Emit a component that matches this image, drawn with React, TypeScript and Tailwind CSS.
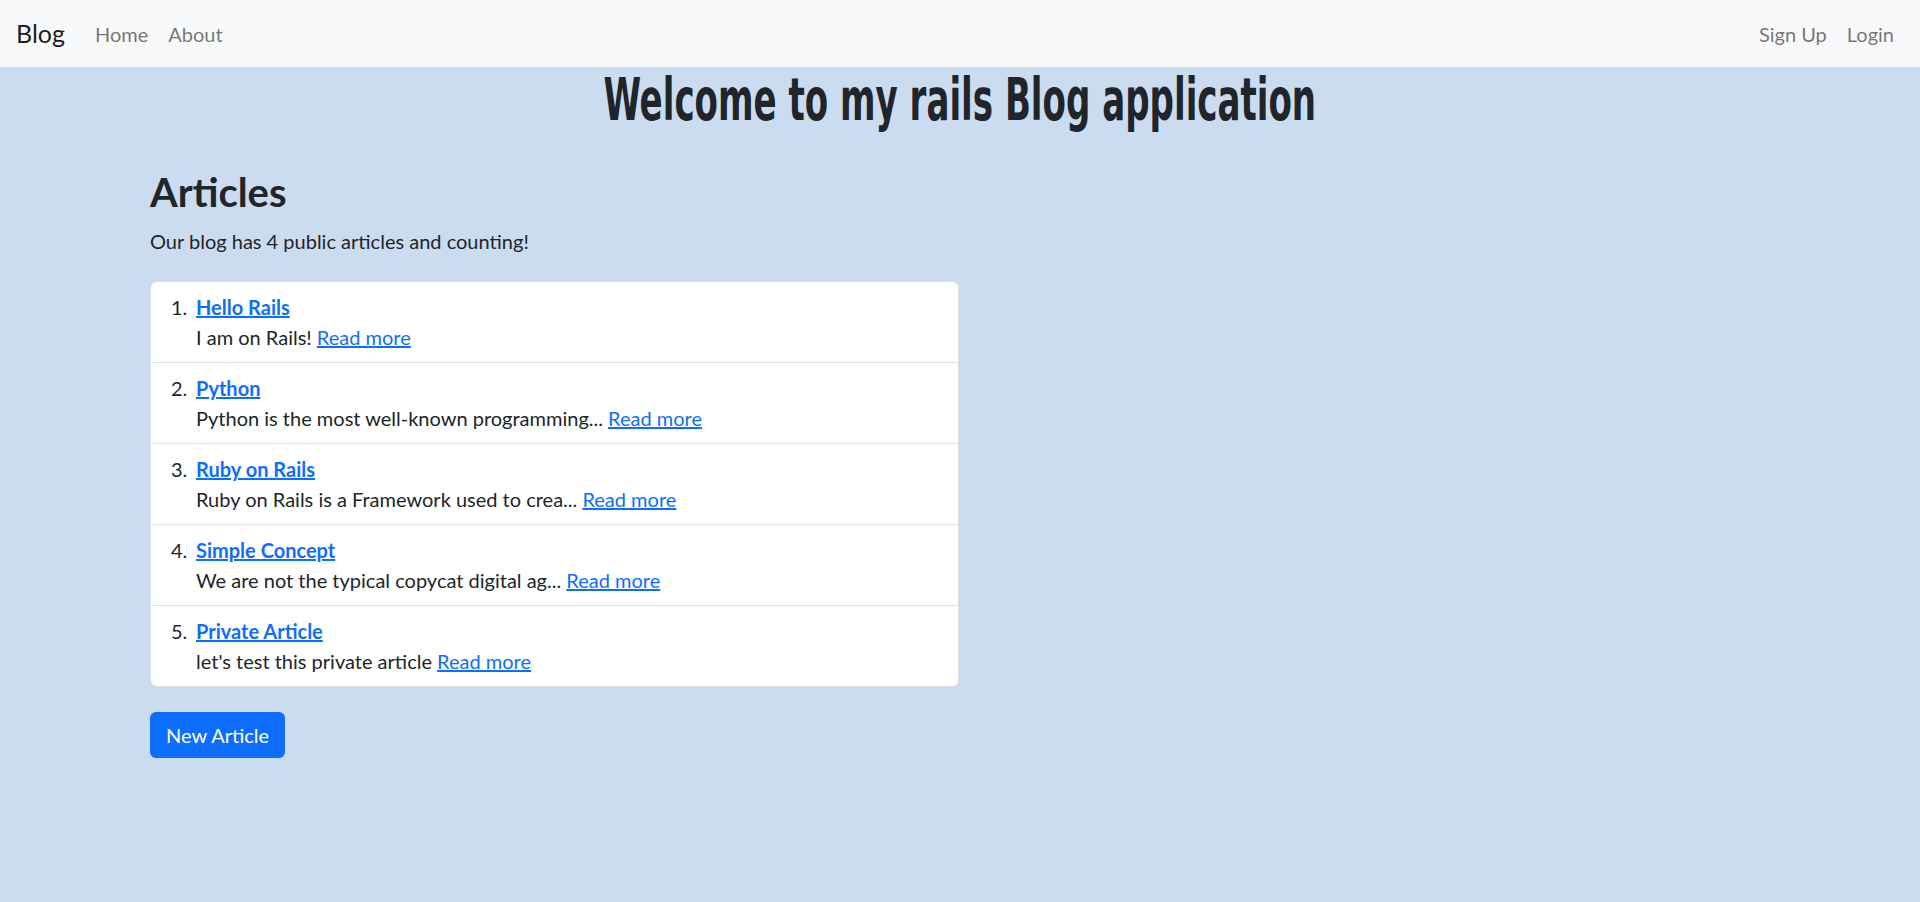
const articles = [
  { title: "Hello Rails", body: "I am on Rails!" },
  { title: "Python", body: "Python is the most well-known programming..." },
  { title: "Ruby on Rails", body: "Ruby on Rails is a Framework used to crea..." },
  { title: "Simple Concept", body: "We are not the typical copycat digital ag..." },
  { title: "Private Article", body: "let's test this private article" },
];

const sans = "font-['Lato','Noto_Sans',sans-serif]";

export default function App() {
  return (
    <div className={`min-h-screen bg-[#cbdcf0] text-[#212529] ${sans}`}>
      <nav className="flex h-[67px] items-center justify-between bg-[#f8f9fa] px-4">
        <div className="flex items-center">
          <a href="#" className="mr-[20px] text-[25px] text-black/90">
            Blog
          </a>
          <a href="#" className="px-[10px] text-[20px] text-black/55">
            Home
          </a>
          <a href="#" className="px-[10px] text-[20px] text-black/55">
            About
          </a>
        </div>
        <div className="flex items-center">
          <a href="#" className="px-[10px] text-[20px] text-black/55">
            Sign Up
          </a>
          <a href="#" className="px-[10px] text-[20px] text-black/55">
            Login
          </a>
        </div>
      </nav>

      <h1 className="pt-[2px] text-center font-['Liberation_Sans_Narrow','DejaVu_Sans_Condensed',sans-serif] text-[58px] font-bold leading-[62px] text-[#212529]">
        <span className="inline-block scale-x-[0.653]">Welcome to my rails Blog application</span>
      </h1>

      <main className="mx-auto w-[1650px] px-[15px] pt-[37px]">
        <h2 className="text-[40px] font-bold leading-[48px]">Articles</h2>
        <p className="mt-[10px] text-[20px] leading-[30px]">
          Our blog has 4 public articles and counting!
        </p>

        <ol className="mt-[25px] w-[809px] overflow-hidden rounded-[7px] border border-[#dee2e6] bg-white">
          {articles.map((a, i) => (
            <li
              key={a.title}
              className="flex border-b border-[#dee2e6] px-[20px] py-[10px] text-[20px] leading-[30px] last:border-b-0"
            >
              <span className="w-[25px] shrink-0">{i + 1}.</span>
              <div>
                <a href="#" className="font-bold text-[#0d6efd] underline">
                  {a.title}
                </a>
                <div>
                  {a.body}{" "}
                  <a href="#" className="text-[#0d6efd] underline">
                    Read more
                  </a>
                </div>
              </div>
            </li>
          ))}
        </ol>

        <button className="mt-[25px] h-[46px] rounded-[6px] bg-[#0d6efd] px-[16px] text-[20px] text-white">
          New Article
        </button>
      </main>
    </div>
  );
}
